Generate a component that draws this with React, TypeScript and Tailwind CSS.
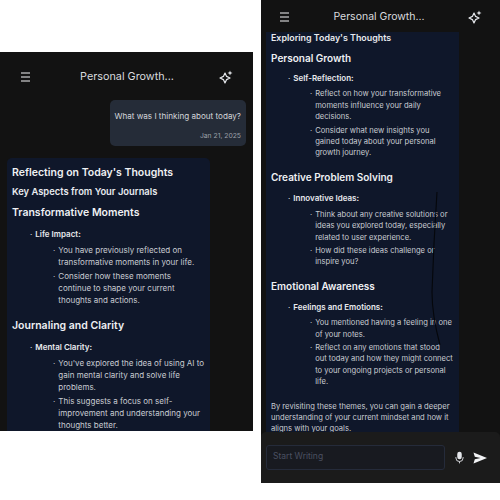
import React from "react";

const Menu = () => (
  <svg width="11" height="10" viewBox="0 0 11 10" fill="none" stroke="#f3f4f6" strokeWidth="1.2">
    <path d="M1 1h9M1 5h9M1 9h9" />
  </svg>
);

const Sparkle = () => (
  <svg width="14" height="14" viewBox="0 0 14 14" fill="none" stroke="#e5e7eb" strokeWidth="1.2" strokeLinejoin="round">
    <path d="M6 3 L7.6 6.4 L11 8 L7.6 9.6 L6 13 L4.4 9.6 L1 8 L4.4 6.4 Z" />
    <path d="M11 0.5 L11.7 2.3 L13.5 3 L11.7 3.7 L11 5.5 L10.3 3.7 L8.5 3 L10.3 2.3 Z" fill="#e5e7eb" stroke="none" />
  </svg>
);

const Header = ({ className, titleClass }: { className: string; titleClass: string }) => (
  <div className={`flex shrink-0 items-center justify-between ${className}`}>
    <Menu />
    <span className={`leading-4 text-[#d9dbdf] ${titleClass}`}>Personal Growth...</span>
    <Sparkle />
  </div>
);

type P = { children: React.ReactNode; className?: string };

const LeftH = ({ children, className = "" }: P) => (
  <div className={`text-[10.5px] leading-[14px] font-semibold text-[#eef0f3] ${className}`}>{children}</div>
);
const RightH = ({ children, className = "" }: P) => (
  <div className={`text-[10px] leading-[14px] font-semibold text-[#eef0f3] ${className}`}>{children}</div>
);

const LeftL1 = ({ children, className = "" }: P) => (
  <div className={`ml-[18px] flex gap-[3px] text-[8px] leading-[12px] font-semibold text-[#e8eaee] ${className}`}>
    <span className="font-normal">·</span>
    <span>{children}</span>
  </div>
);
const RightL1 = ({ children, className = "" }: P) => (
  <div className={`ml-[17px] flex gap-[3px] text-[8px] leading-[11.4px] font-semibold text-[#e8eaee] ${className}`}>
    <span className="font-normal">·</span>
    <span>{children}</span>
  </div>
);

const LeftL2 = ({ children }: P) => (
  <div className="ml-[41px] flex gap-[3px] text-[8px] leading-[12px] text-[#c9ccd2]">
    <span>·</span>
    <span>{children}</span>
  </div>
);
const RightL2 = ({ children }: P) => (
  <div className="ml-[39px] flex gap-[3px] text-[7.6px] leading-[11.4px] text-[#c9ccd2]">
    <span>·</span>
    <span>{children}</span>
  </div>
);

const Stroke = () => (
  <svg className="absolute top-[192px] left-[170px]" width="12" height="155" viewBox="0 0 12 155" fill="none" stroke="#05070b" strokeWidth="1.1">
    <path d="M6 0C4 30 2 70 1 100C1 120 5 138 9 153" />
  </svg>
);

const Mic = () => (
  <svg width="9" height="13" viewBox="0 0 10 14" fill="#e5e7eb">
    <rect x="2.5" y="0.5" width="5" height="8.5" rx="2.5" />
    <path d="M1 6.5v1a4 4 0 0 0 8 0v-1" fill="none" stroke="#e5e7eb" strokeWidth="1" />
    <path d="M5 11.5v2" stroke="#e5e7eb" strokeWidth="1" />
  </svg>
);

const Send = () => (
  <svg width="14" height="12" viewBox="0 0 14 12" fill="#f3f4f6">
    <path d="M0.5 0.5 L14 6 L0.5 11.5 L1.8 7.2 L7.5 6 L1.8 4.8 Z" />
  </svg>
);

export default function App() {
  return (
    <div className="flex h-[500px] w-[500px] gap-[8px] overflow-hidden bg-white font-['Inter',sans-serif]">
      <div className="mt-[52px] flex h-[379px] w-[253px] shrink-0 flex-col overflow-hidden bg-[#121212]">
        <Header className="h-[48px] pt-[2px] pr-[20px] pl-[20px]" titleClass="ml-[4px] text-[10.8px]" />
        <div className="flex justify-end pr-[7px]">
          <div className="flex h-[46px] w-[136px] flex-col items-end rounded-[5px] bg-[#252c38] px-[5px] pt-[9px]">
            <span className="text-[8.1px] leading-[14px] whitespace-nowrap text-[#d4d6da]">What was I thinking about today?</span>
            <span className="mt-[7px] text-[6.8px] leading-[12px] text-[#9ca0a8]">Jan 21, 2025</span>
          </div>
        </div>
        <div className="mt-[12px] ml-[7px] min-h-0 w-[203px] flex-1 rounded-t-[5px] bg-[#0f172a] px-[5px] pt-[8px]">
          <LeftH>Reflecting on Today&apos;s Thoughts</LeftH>
          <div className="mt-[4.5px] text-[9.4px] leading-[13px] font-semibold text-[#e8eaee]">Key Aspects from Your Journals</div>
          <LeftH className="mt-[8.5px]">Transformative Moments</LeftH>
          <LeftL1 className="mt-[8px]">Life Impact:</LeftL1>
          <div className="mt-[4px] flex flex-col gap-[2px]">
            <LeftL2>You have previously reflected on transformative moments in your life.</LeftL2>
            <LeftL2>Consider how these moments continue to shape your current thoughts and actions.</LeftL2>
          </div>
          <LeftH className="mt-[13px]">Journaling and Clarity</LeftH>
          <LeftL1 className="mt-[8px]">Mental Clarity:</LeftL1>
          <div className="mt-[4px] flex flex-col gap-[2px]">
            <LeftL2>You&apos;ve explored the idea of using AI to gain mental clarity and solve life problems.</LeftL2>
            <LeftL2>This suggests a focus on self-improvement and understanding your thoughts better.</LeftL2>
          </div>
        </div>
      </div>

      <div className="relative flex h-[483px] w-[239px] shrink-0 flex-col overflow-hidden bg-[#121212]">
        <Header className="h-[32px] pt-[2px] pr-[18px] pl-[18px]" titleClass="text-[10.5px]" />
        <div className="ml-[5px] min-h-0 w-[193px] flex-1 overflow-hidden bg-[#0f172a] pr-[6px] pl-[5px]">
          <div className="text-[8.9px] leading-[12px] font-semibold text-[#e8eaee]">Exploring Today&apos;s Thoughts</div>
          <RightH className="mt-[7px]">Personal Growth</RightH>
          <RightL1 className="mt-[8px]">Self-Reflection:</RightL1>
          <div className="mt-[4px] flex flex-col gap-[2px]">
            <RightL2>Reflect on how your transformative moments influence your daily decisions.</RightL2>
            <RightL2>Consider what new insights you gained today about your personal growth journey.</RightL2>
          </div>
          <RightH className="mt-[11.5px]">Creative Problem Solving</RightH>
          <RightL1 className="mt-[9px]">Innovative Ideas:</RightL1>
          <div className="mt-[4px] flex flex-col gap-[2px]">
            <RightL2>Think about any creative solutions or ideas you explored today, especially related to user experience.</RightL2>
            <RightL2>How did these ideas challenge or inspire you?</RightL2>
          </div>
          <RightH className="mt-[11px]">Emotional Awareness</RightH>
          <RightL1 className="mt-[9px]">Feelings and Emotions:</RightL1>
          <div className="mt-[4px] flex flex-col gap-[2px]">
            <RightL2>You mentioned having a feeling in one of your notes.</RightL2>
            <RightL2>Reflect on any emotions that stood out today and how they might connect to your ongoing projects or personal life.</RightL2>
          </div>
          <p className="mt-[13px] text-[7.6px] leading-[11.4px] text-[#c9ccd2]">
            By revisiting these themes, you can gain a deeper understanding of your current mindset and how it aligns with your goals.
          </p>
        </div>
        <div className="flex h-[51px] shrink-0 items-center rounded-t-[5px] bg-[#1b1b1b] pr-[13px] pl-[5px]">
          <div className="flex h-[25px] w-[179px] items-center rounded-[3px] border border-[#252b3a] bg-[#181a20] px-[6px] pb-[3px] text-[8.5px] text-[#4b5060]">
            Start Writing
          </div>
          <div className="ml-[10px] flex flex-1 items-center justify-between">
            <Mic />
            <Send />
          </div>
        </div>
        <Stroke />
      </div>
    </div>
  );
}
